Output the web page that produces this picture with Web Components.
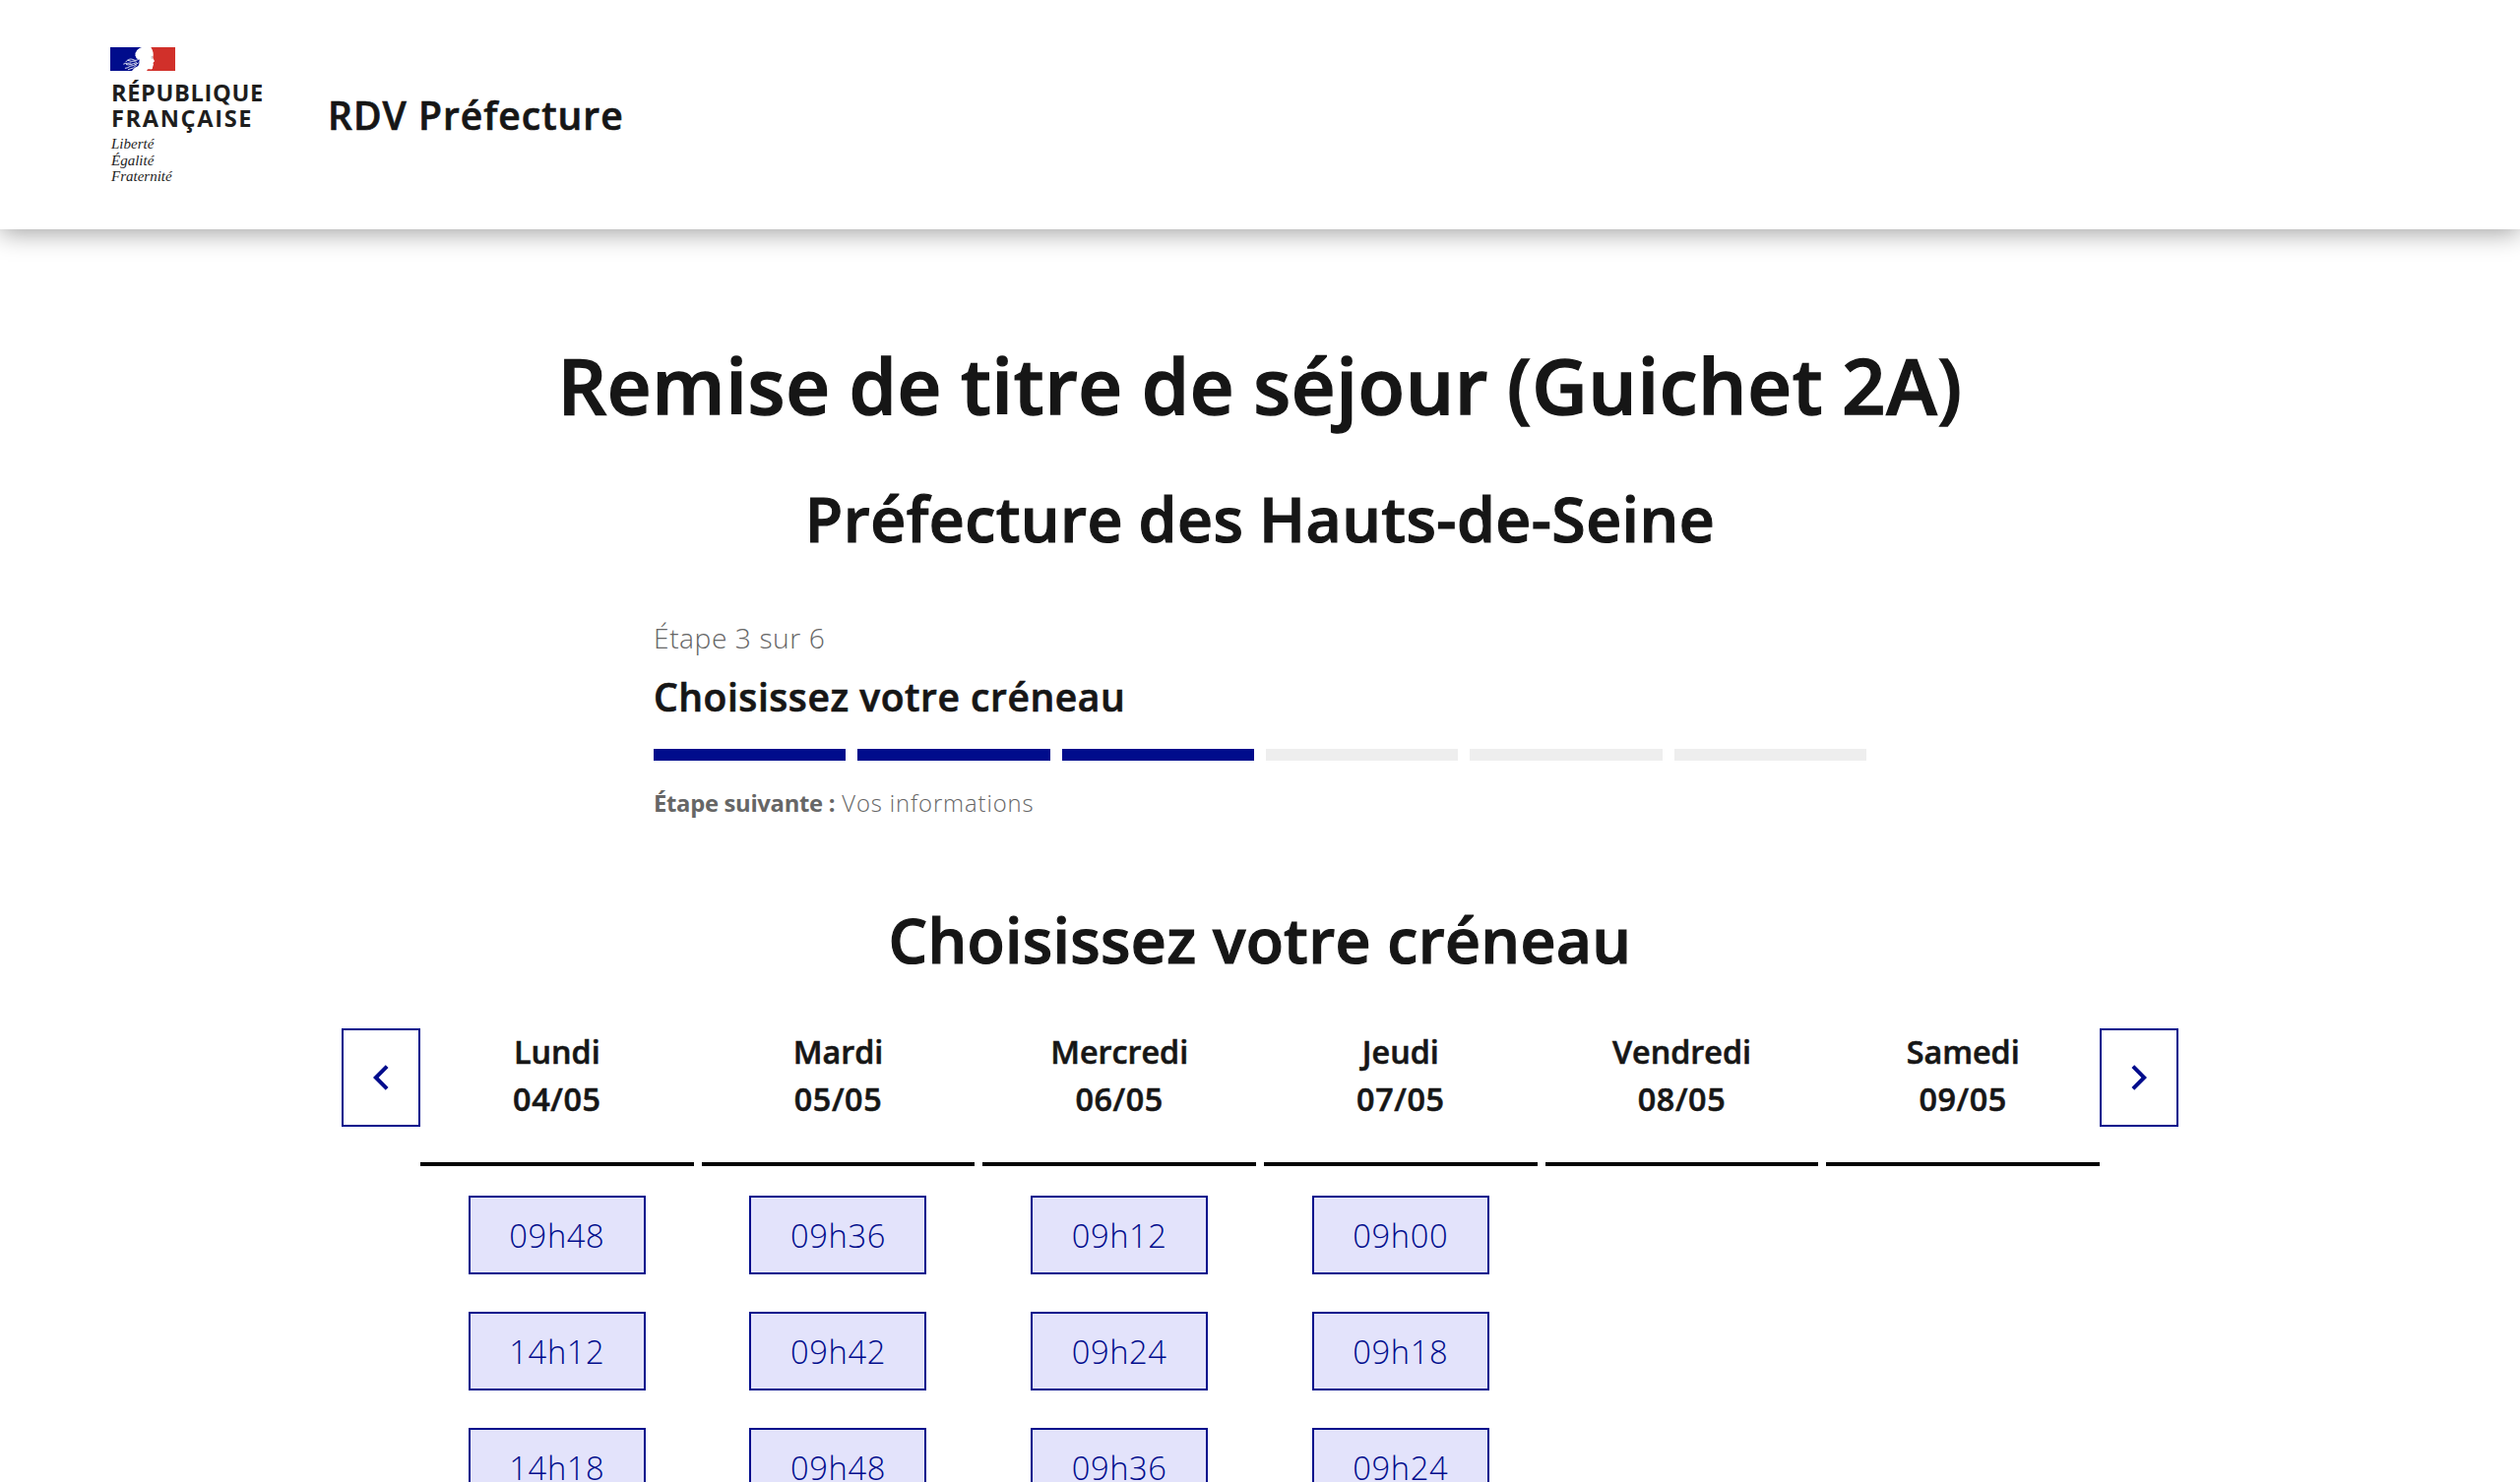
<!DOCTYPE html>
<html lang="fr">
<head>
<meta charset="utf-8">
<title>RDV Préfecture</title>
<style>
  :root {
    --blue-france: #000c8c;
    --slot-bg: #e3e3fb;
    --grey-text: #666;
    --grey-bar: #eee;
  }
  body {
    margin: 0;
    height: 100vh;
    overflow: hidden;
    background: #fff;
    color: #161616;
    font-family: "Open Sans", "Noto Sans", sans-serif;
  }
  main { display: flex; flex-direction: column; align-items: center; padding-top: 110px; }
</style>
</head>
<body>
<site-header><rf-logo></rf-logo><span slot="title">RDV Préfecture</span></site-header>
<main>
  <page-title level="1" style="letter-spacing: 0.62px; word-spacing: -2px">Remise de titre de séjour (Guichet 2A)</page-title>
  <page-title level="2" style="margin-top: 48px; letter-spacing: 0.41px; word-spacing: -1px">Préfecture des Hauts-de-Seine</page-title>
  <step-indicator current="3" total="6">
    <span slot="title">Choisissez votre créneau</span>
    <span slot="next">Vos informations</span>
  </step-indicator>
  <page-title level="2" style="margin-top: 79px; letter-spacing: 0.28px">Choisissez votre créneau</page-title>
  <slot-calendar></slot-calendar>
</main>

<script>
class RfLogo extends HTMLElement {
  constructor() {
    super();
    this.attachShadow({ mode: 'open' });
  }

  connectedCallback() {
    this.shadowRoot.innerHTML = `
      <style>
        :host { display: block; width: 180px; color: #1e1e1e; }
        svg { display: block; width: 66px; height: 24px; }
        .name { margin-top: 9px; padding-left: 1px; font-size: 23.6px; line-height: 26px; font-weight: 700; white-space: nowrap; }
        .name div:first-child { letter-spacing: 0.65px; }
        .name div:last-child { letter-spacing: 1.65px; }
        .motto { margin-top: 5px; padding-left: 1px; font: italic 15px/16.5px "Liberation Serif", serif; }
      </style>
      <svg viewBox="0 0 198 72" aria-hidden="true">
        <path fill="#000c8c" d="M0 0H96C88 3 80 8 79 14C74 18 78 22 76 26C80 28 77 33 82 35C88 36 91 38 88 42C89 48 88 54 84 58C78 60 72 64 66 72H0Z"/>
        <path fill="#d1302a" d="M124 0H198V72H112C111 68 115 66 121 67C128 68 130 65 129 60C132 57 130 55 132 52C129 49 131 46 135 43C134 38 130 35 130 30C133 23 131 11 124 0Z"/>
        <path fill="none" stroke="#fff" stroke-width="2.6" stroke-linecap="round" d="M47 45C54 37 62 33 72 39C77 41 82 40 86 37M54 40L64 43L78 42M41 51C50 47 57 50 63 48M49 53C58 56 66 51 80 47M46 64C56 64 58 56 70 56L85 48M55 68L70 63L80 54"/>
        <path fill="none" stroke="#85868f" stroke-width="2" d="M125 28L129 30M126 31L127 35"/>
      </svg>
      <div class="name"><div>RÉPUBLIQUE</div><div>FRANÇAISE</div></div>
      <div class="motto"><div>Liberté</div><div>Égalité</div><div>Fraternité</div></div>
    `;
  }
}

class SiteHeader extends HTMLElement {
  constructor() {
    super();
    this.attachShadow({ mode: 'open' });
  }

  connectedCallback() {
    this.shadowRoot.innerHTML = `
      <style>
        :host {
          display: flex;
          align-items: flex-start;
          gap: 41px;
          box-sizing: border-box;
          height: 233px;
          padding: 48px 112px 0;
          background: #fff;
          box-shadow: 0 4px 24px rgba(0, 0, 0, 0.37);
        }
        .title {
          margin-top: 45px;
          font-size: 39px;
          line-height: 48px;
          font-weight: 600;
          letter-spacing: 1px;
          -webkit-text-stroke: 0.018em currentColor;
        }
      </style>
      <slot></slot>
      <div class="title"><slot name="title"></slot></div>
    `;
  }
}

class PageTitle extends HTMLElement {
  constructor() {
    super();
    this.attachShadow({ mode: 'open' });
  }

  connectedCallback() {
    const tag = this.getAttribute('level') === '1' ? 'h1' : 'h2';
    this.shadowRoot.innerHTML = `
      <style>
        :host { display: block; text-align: center; white-space: nowrap; }
        h1, h2 { margin: 0; font-weight: 600; -webkit-text-stroke: 0.018em currentColor; }
        h1 { font-size: 77.9px; line-height: 96px; }
        h2 { font-size: 62.6px; line-height: 80px; }
      </style>
      <${tag}><slot></slot></${tag}>
    `;
  }
}

class StepIndicator extends HTMLElement {
  constructor() {
    super();
    this.attachShadow({ mode: 'open' });
  }

  connectedCallback() {
    const current = Number(this.getAttribute('current'));
    const total = Number(this.getAttribute('total'));
    let bars = '';
    for (let i = 0; i < total; i++) {
      bars += `<i class="${i < current ? 'done' : ''}"></i>`;
    }
    this.shadowRoot.innerHTML = `
      <style>
        :host { display: block; width: 1232px; margin-top: 57px; }
        .state { font-size: 28.2px; line-height: 48px; font-weight: 300; letter-spacing: 0.56px; color: var(--grey-text); }
        .title {
          margin-top: 12px;
          font-size: 39px;
          line-height: 48px;
          font-weight: 600;
          letter-spacing: 0.55px;
          -webkit-text-stroke: 0.018em currentColor;
        }
        .bars { display: grid; grid-template-columns: repeat(${total}, 1fr); gap: 12px; margin-top: 29px; }
        .bars i { height: 12px; background: var(--grey-bar); }
        .bars i.done { background: var(--blue-france); }
        .next { margin-top: 23px; font-size: 23.8px; line-height: 40px; font-weight: 300; letter-spacing: 0.9px; color: var(--grey-text); }
        .next b { font-weight: 700; letter-spacing: -0.3px; }
      </style>
      <div class="state">Étape ${current} sur ${total}</div>
      <div class="title"><slot name="title"></slot></div>
      <div class="bars">${bars}</div>
      <div class="next"><b>Étape suivante :</b> <slot name="next"></slot></div>
    `;
  }
}

class NavButton extends HTMLElement {
  constructor() {
    super();
    this.attachShadow({ mode: 'open' });
  }

  connectedCallback() {
    const prev = this.getAttribute('direction') === 'prev';
    const path = prev
      ? 'M10.828 12l4.95 4.95-1.414 1.414L8 12l6.364-6.364 1.414 1.414z'
      : 'M13.172 12l-4.95-4.95 1.414-1.414L16 12l-6.364 6.364-1.414-1.414z';
    this.shadowRoot.innerHTML = `
      <style>
        :host { display: block; flex: none; margin-top: 2px; }
        button {
          display: flex;
          align-items: center;
          justify-content: center;
          width: 80px;
          height: 100px;
          padding: 0;
          border: 2px solid var(--blue-france);
          background: #fff;
          cursor: pointer;
        }
        svg { width: 48px; height: 48px; flex: none; fill: var(--blue-france); }
      </style>
      <button aria-label="${prev ? 'Semaine précédente' : 'Semaine suivante'}">
        <svg viewBox="0 0 24 24"><path d="${path}"/></svg>
      </button>
    `;
  }
}

class TimeSlot extends HTMLElement {
  constructor() {
    super();
    this.attachShadow({ mode: 'open' });
  }

  connectedCallback() {
    this.shadowRoot.innerHTML = `
      <style>
        :host {
          display: block;
          box-sizing: border-box;
          width: 180px;
          height: 80px;
          border: 2px solid var(--blue-france);
          background: var(--slot-bg);
          color: var(--blue-france);
          font-size: 32.7px;
          line-height: 78px;
          font-weight: 300;
          letter-spacing: 0.6px;
          text-align: center;
          cursor: pointer;
        }
      </style>
      <slot></slot>
    `;
  }
}

class DayColumn extends HTMLElement {
  constructor() {
    super();
    this.attachShadow({ mode: 'open' });
  }

  connectedCallback() {
    this.shadowRoot.innerHTML = `
      <style>
        :host { display: block; }
        .head {
          padding: 1px 0 41px;
          border-bottom: 4px solid #000;
          text-align: center;
          font-size: 32.3px;
          line-height: 48px;
          font-weight: 600;
          -webkit-text-stroke: 0.018em currentColor;
        }
        .date { letter-spacing: 0.6px; }
        .slots { display: flex; flex-direction: column; align-items: center; gap: 38px; padding-top: 30px; }
      </style>
      <div class="head">
        <div>${this.getAttribute('day')}</div>
        <div class="date">${this.getAttribute('date')}</div>
      </div>
      <div class="slots"><slot></slot></div>
    `;
  }
}

class SlotCalendar extends HTMLElement {
  constructor() {
    super();
    this.attachShadow({ mode: 'open' });
    this.days = [
      { day: 'Lundi', date: '04/05', slots: ['09h48', '14h12', '14h18'] },
      { day: 'Mardi', date: '05/05', slots: ['09h36', '09h42', '09h48'] },
      { day: 'Mercredi', date: '06/05', slots: ['09h12', '09h24', '09h36'] },
      { day: 'Jeudi', date: '07/05', slots: ['09h00', '09h18', '09h24'] },
      { day: 'Vendredi', date: '08/05', slots: [] },
      { day: 'Samedi', date: '09/05', slots: [] }
    ];
  }

  connectedCallback() {
    this.shadowRoot.innerHTML = `
      <style>
        :host { display: flex; align-items: flex-start; width: 1866px; margin-top: 48px; }
        .days { flex: 1; display: grid; grid-template-columns: repeat(6, 1fr); gap: 8px; }
      </style>
      <nav-button direction="prev"></nav-button>
      <div class="days">
        ${this.days.map(d => `
          <day-column day="${d.day}" date="${d.date}">
            ${d.slots.map(s => `<time-slot>${s}</time-slot>`).join('')}
          </day-column>
        `).join('')}
      </div>
      <nav-button direction="next"></nav-button>
    `;
  }
}

customElements.define('rf-logo', RfLogo);
customElements.define('site-header', SiteHeader);
customElements.define('page-title', PageTitle);
customElements.define('step-indicator', StepIndicator);
customElements.define('nav-button', NavButton);
customElements.define('time-slot', TimeSlot);
customElements.define('day-column', DayColumn);
customElements.define('slot-calendar', SlotCalendar);
</script>
</body>
</html>
